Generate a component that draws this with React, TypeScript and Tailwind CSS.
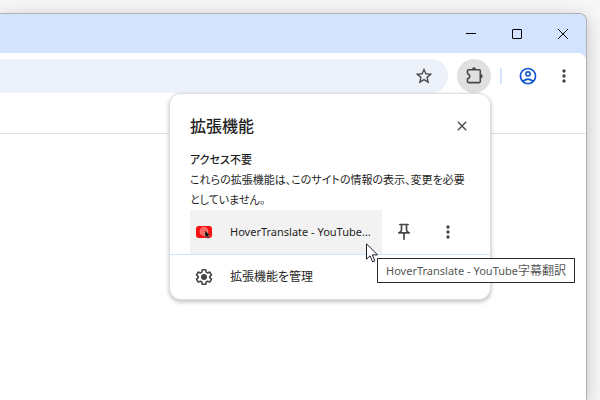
import type { ButtonHTMLAttributes } from 'react'
import { MdClose, MdMoreVert, MdOutlineAccountCircle, MdOutlinePushPin, MdStarBorder } from 'react-icons/md'

function IconButton({ className = '', ...props }: ButtonHTMLAttributes<HTMLButtonElement>) {
  return (
    <button
      type="button"
      className={`flex shrink-0 items-center justify-center rounded-full ${className}`}
      {...props}
    />
  )
}

function PuzzleIcon() {
  return (
    <svg width="20" height="20" viewBox="0 0 20 20" fill="none" aria-hidden="true">
      <path
        d="M4.500 3.800H15.300a1 1 0 0 1 1 1v10.800a1 1 0 0 1-1 1H4.500a1 1 0 0 1-1-1v-2.900c1.500-.3 2.200-1.200 2.200-2.500s-.7-2.200-2.200-2.500V4.800a1 1 0 0 1 1-1z"
        stroke="currentColor"
        strokeWidth="1.600"
        strokeLinejoin="round"
      />
      <path d="M8 3.200a2 1.900 0 0 1 4 0zM16.800 8.200a1.900 2 0 0 1 0 4z" fill="currentColor" />
    </svg>
  )
}

function GearIcon() {
  return (
    <svg width="20" height="20" viewBox="0 0 20 20" fill="none" aria-hidden="true">
      <path
        d="M8.300 2.800h3.400l.5 2.300 1.300.8 2.300-.8 1.700 2.900-1.800 1.600v1l1.800 1.500-1.700 2.900-2.300-.7-1.300.7-.5 2.300H8.300l-.5-2.300-1.300-.7-2.300.7-1.700-2.900 1.800-1.500v-1L2.500 8l1.700-2.900 2.300.8 1.300-.8z"
        stroke="currentColor"
        strokeWidth="1.600"
        strokeLinejoin="round"
      />
      <circle cx="10" cy="10" r="3" fill="currentColor" />
    </svg>
  )
}

function HoverTranslateLogo() {
  return (
    <svg className="shrink-0" width="16" height="16" viewBox="0 0 16 16" fill="none" aria-hidden="true">
      <rect y="2" width="16" height="12" rx="3" fill="#f9100c" />
      <circle cx="8" cy="7.500" r="3.800" fill="#fb4a45" stroke="#fb8d87" strokeWidth="1.200" />
      <circle cx="8" cy="7.500" r="1.800" stroke="#fb8d87" />
      <path d="M9 6.500v7l1.700-1.500 1.100 2.600 1.300-.6-1.100-2.500h2.200z" fill="#111" stroke="#b9a5a4" strokeWidth=".4" />
    </svg>
  )
}

function TitleBar() {
  return (
    <div className="flex h-[39px] justify-end bg-[#d3e3fd] text-black">
      <button type="button" aria-label="最小化" className="flex w-[46px] items-center justify-center">
        <svg width="10" height="10" stroke="currentColor"><path d="M0 4.500h10" /></svg>
      </button>
      <button type="button" aria-label="最大化" className="flex w-[46px] items-center justify-center">
        <svg width="10" height="10" stroke="currentColor" fill="none"><rect x=".5" y=".5" width="9" height="9" rx=".5" /></svg>
      </button>
      <button type="button" aria-label="閉じる" className="flex w-[46px] items-center justify-center">
        <svg width="10" height="10" stroke="currentColor"><path d="M0 0l10 10M10 0L0 10" /></svg>
      </button>
    </div>
  )
}

function Toolbar() {
  return (
    <div className="flex h-[81px] items-start border-b border-[#dfe1e5] pt-[6px] pr-3 text-[#474747]">
      <div className="flex h-[34px] flex-1 items-center justify-end rounded-r-full bg-[#ecf1fa] pr-[14px]">
        <IconButton aria-label="ブックマークに追加">
          <MdStarBorder size={20} />
        </IconButton>
      </div>
      <IconButton aria-label="拡張機能" aria-expanded="true" className="ml-[9px] size-[34px] bg-[#e0e0e0]">
        <PuzzleIcon />
      </IconButton>
      <span className="mt-[9px] ml-[9px] h-4 w-[2px] rounded-full bg-[#d3e3fd]" />
      <IconButton aria-label="プロフィール" className="ml-[9px] size-[34px] text-[#0b57d0]">
        <MdOutlineAccountCircle size={20} />
      </IconButton>
      <IconButton aria-label="メニュー" className="ml-[9px] h-[34px] w-5">
        <MdMoreVert size={20} />
      </IconButton>
    </div>
  )
}

function ExtensionsMenu() {
  return (
    <div
      role="dialog"
      aria-labelledby="menu-title"
      className="absolute top-[79px] right-[95px] w-[322px] rounded-xl border border-[#dde0e0] bg-white text-xs text-[#1f1f1f] shadow-[0_2px_4px_rgba(0,0,0,0.25)]"
    >
      <div className="flex items-center justify-between px-5 pt-5">
        <h1 id="menu-title" className="text-base leading-6 font-medium">拡張機能</h1>
        <IconButton aria-label="閉じる" className="size-4 text-[#474747]">
          <MdClose size={16} className="shrink-0" />
        </IconButton>
      </div>

      <div className="px-5 pt-3 text-[11px] leading-5">
        <h2 className="font-medium">アクセス不要</h2>
        <p>これらの拡張機能は、このサイトの情報の表示、変更を必要としていません。</p>
      </div>

      <div className="flex h-11 items-center pl-5 text-[#474747]">
        <button type="button" className="flex h-full w-48 items-center gap-[18px] bg-[#f2f2f2] pr-2 pl-[6px] text-left text-[#1f1f1f]">
          <HoverTranslateLogo />
          <span className="flex-1 text-[11px] whitespace-nowrap">HoverTranslate - YouTube...</span>
        </button>
        <IconButton aria-label="固定" className="ml-1 size-9">
          <MdOutlinePushPin size={20} />
        </IconButton>
        <IconButton aria-label="その他のオプション" className="ml-2 size-9">
          <MdMoreVert size={20} />
        </IconButton>
      </div>

      <button type="button" className="flex h-[45px] w-full items-center gap-4 border-t border-[#d3e3fd] pl-6 text-left">
        <span className="text-[#474747]"><GearIcon /></span>
        拡張機能を管理
      </button>
    </div>
  )
}

export default function App() {
  return (
    <div className="flex min-h-screen flex-col overflow-hidden bg-[#f7f7f7] pt-[13px] pr-[13px] font-['Noto_Sans','Noto_Sans_CJK_JP',sans-serif] [font-feature-settings:'palt']">
      <div className="relative flex-1 rounded-tr-lg border-t border-r border-[#b0b0b0] bg-white shadow-[0_4px_18px_rgba(0,0,0,0.22)]">
        <div className="overflow-hidden rounded-tr-lg bg-[#d3e3fd]">
          <TitleBar />
          <div className="rounded-tr-lg bg-white">
            <Toolbar />
          </div>
        </div>

        <ExtensionsMenu />

        {/* hover tooltip and the pointer above it */}
        <div
          role="tooltip"
          className="absolute top-[244px] right-[11px] border border-[#2b2b2b] bg-white px-2 text-[11px] leading-[23px] whitespace-nowrap text-[#575757]"
        >
          HoverTranslate - YouTube<span className="text-xs leading-none">字幕翻訳</span>
        </div>
        <svg className="absolute top-[229px] right-[207px]" width="13" height="20" viewBox="0 0 13 20" aria-hidden="true">
          <path d="M.5.800v15.400l3.500-3.400 2.600 6 2.300-1-2.600-5.900h5.200z" fill="#fff" stroke="#1a1a2a" />
        </svg>
      </div>
    </div>
  )
}
